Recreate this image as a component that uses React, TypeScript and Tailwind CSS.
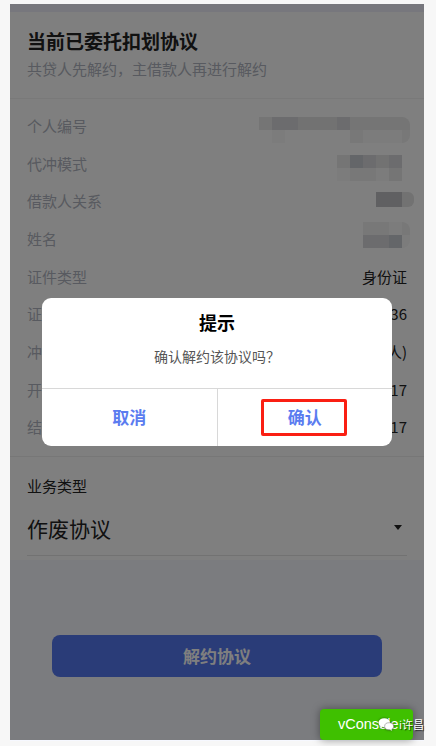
const FONT = "font-['Microsoft_YaHei','Noto_Sans_CJK_SC','Liberation_Sans',sans-serif]"

// mosaic blocks that hide personal data in the source screenshot
function Mosaic({ rows, className }: { rows: string[][]; className?: string }) {
  return (
    <div className={`flex flex-col overflow-hidden rounded-r-[8px] ${className ?? ''}`}>
      {rows.map((cells, i) => (
        <div key={i} className="flex justify-end">
          {cells.map((c, j) => (
            <div key={j} className={`h-[13px] ${j === cells.length - 1 ? 'w-[8px]' : 'w-[13px]'}`} style={{ backgroundColor: c }} />
          ))}
        </div>
      ))}
    </div>
  )
}

const A = '#f8f8f8'
const B = '#f0f0f0'
const C = '#eaeaea'
const D = '#e4e4e4'
const E = '#d8d8dc'
const F = '#c8ccd2'
const N = '#ffffff'

function Row({ label, children }: { label: string; children?: React.ReactNode }) {
  return (
    <div className="flex h-[37.7px] items-center justify-between">
      <span className="text-[15px] leading-[20px] text-[#b0b4c0]">{label}</span>
      <div className="text-[15px] leading-[20px] text-[#222222]">{children}</div>
    </div>
  )
}

export default function App() {
  return (
    <div className={`h-[746px] w-[436px] overflow-hidden bg-[#f7f7f7] pl-[10px] pt-[4px] ${FONT}`}>
      <div className="relative h-[736px] w-[414px] bg-white">
        <div className="h-[8px] bg-[#eeeefa]" />

        <div className="h-[87px] border-b border-[#f2f2f2] px-[17px] pt-[15px]">
          <h1 className="text-[19px] font-bold leading-[28px] text-[#222222]">当前已委托扣划协议</h1>
          <p className="mt-[4px] text-[15px] leading-[20px] text-[#b0b4c0]">{'共贷人先解约\uFF0C主借款人再进行解约'}</p>
        </div>

        <div className="flex flex-col border-b border-[#eeeeee] px-[17px] pb-[10px] pt-[8px]">
          <Row label="个人编号">
            <Mosaic
              className="-mr-[3px] translate-y-[4px]"
              rows={[
                [C, E, E, D, D, D, E, C, C, C, C, C],
                [N, A, N, N, N, N, N, B, A, A, A, B],
              ]}
            />
          </Row>
          <Row label="代冲模式">
            <Mosaic className="-mr-[3px] translate-y-[4px]" rows={[[C, F, E, D, E, N], [A, B, B, A, C, N]]} />
          </Row>
          <Row label="借款人关系">
            <div className="-mr-[7px] flex h-[15px] -translate-y-[2px]">
              <div className="h-[15px] w-[26px] bg-[#c0c0c4]" />
              <div className="h-[15px] w-[12px] rounded-r-[6px] bg-[#e4e4e4]" />
            </div>
          </Row>
          <Row label="姓名">
            <Mosaic className="-mr-[3px] -translate-y-[4px]" rows={[[N, B, B, A, B], [N, E, E, F, A]]} />
          </Row>
          <Row label="证件类型">身份证</Row>
          <Row label="证件号码">36</Row>
          <Row label="冲还方式">人)</Row>
          <Row label="开始日期">17</Row>
          <Row label="结束日期">17</Row>
        </div>

        <div className="px-[17px] pt-[19px]">
          <p className="text-[15px] leading-[20px] text-[#222222]">业务类型</p>
          <div className="mt-[12px] flex h-[48px] items-center justify-between border-b border-[#e4e4e4] pb-[8px]">
            <span className="text-[21px] leading-[30px] text-[#222222]">作废协议</span>
            <span className="mr-[5px] h-0 w-0 border-x-[4px] border-t-[5px] border-x-transparent border-t-[#222222]" />
          </div>
        </div>

        <div className="mt-[4px] h-[181px] bg-[#f6f8ff] pl-[42px] pt-[75px]">
          <button className="h-[42px] w-[330px] rounded-[8px] bg-[#5478f0] text-[17px] font-bold text-white">
            解约协议
          </button>
        </div>

        {/* mask */}
        <div className="absolute inset-0 bg-black/50" />

        {/* dialog */}
        <div className="absolute left-[32px] top-[294px] h-[148px] w-[350px] rounded-[9px] bg-white">
          <p className="pt-[9px] text-center text-[18px] font-bold leading-[30px] text-black">提示</p>
          <p className="mt-[9px] text-center text-[14px] leading-[20px] text-[#555555]">{'确认解约该协议吗\uFF1F'}</p>
          <div className="mt-[22px] flex h-[58px] border-t border-[#d8d8d8]">
            <button className="flex-1 border-r border-[#d8d8d8] pb-[2px] text-[17px] font-bold text-[#5b7cf0]">取消</button>
            <button className="flex-1 pb-[2px] text-[17px] font-bold text-[#5b7cf0]">确认</button>
          </div>
          {/* red annotation */}
          <div className="absolute left-[219px] top-[101px] h-[37px] w-[86px] rounded-[2px] border-[3px] border-[#fa1f13]" />
        </div>

        {/* vConsole */}
        <div className="absolute left-[310px] top-[705px] flex h-[31px] w-[93px] items-center rounded-[4px] bg-[#3fc000] pl-[18px] font-['Liberation_Sans',sans-serif] text-[14.5px] text-white shadow-[0_0_8px_rgba(0,0,0,0.4)]">
          vConsole
        </div>

        {/* watermark */}
        <div className="absolute left-[368px] top-[712px] flex items-center gap-[5px] whitespace-nowrap">
          <svg width="16" height="15" viewBox="0 0 18 15" fill="#ffffff" className="drop-shadow-[0_0_1px_rgba(0,0,0,0.5)]">
            <ellipse cx="7" cy="5.5" rx="6.5" ry="5" />
            <path d="M3 9l-.5 3 3-2z" />
            <ellipse cx="12.5" cy="9.5" rx="5" ry="4" stroke="#777777" strokeWidth="0.6" />
            <path d="M15 12.5l1 2-3-1.2z" />
          </svg>
          <span className="text-[11px] leading-[16px] text-white [text-shadow:1px_1px_1px_rgba(0,0,0,0.7)]">i许昌</span>
        </div>
      </div>
    </div>
  )
}
